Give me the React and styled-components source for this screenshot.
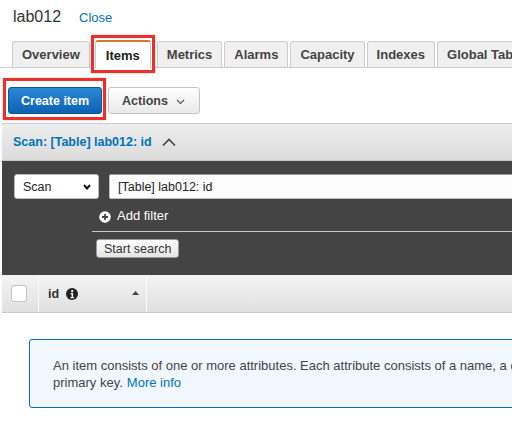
import styled, { createGlobalStyle, css } from "styled-components";

const GlobalStyle = createGlobalStyle`
  * { box-sizing: border-box; }
  html, body {
    margin: 0;
    padding: 0;
    overflow: hidden;
    background: #fff;
  }
  body {
    font-family: "Liberation Sans", Arial, Helvetica, sans-serif;
    font-size: 12.5px;
    color: #444;
  }
`;

const Page = styled.div`
  width: 1300px;
`;

const TitleRow = styled.div`
  display: flex;
  align-items: baseline;
  gap: 18px;
  padding: 7px 0 0 13px;
  height: 27px;
  line-height: 20px;
`;

const Title = styled.span`
  font-size: 16px;
  color: #333;
`;

const Link = styled.a`
  color: #0073bb;
  font-size: 13px;
  text-decoration: none;
  margin-left: ${(p) => p.$gap || 0}px;
`;

const TabBar = styled.div`
  margin-top: 13px;
  height: 28px;
  display: flex;
  align-items: flex-end;
  gap: 2px;
  padding-left: 12px;
  border-bottom: 1px solid #ccc;
`;

// red annotation boxes drawn over the screenshot
const highlight = css`
  position: relative;
  &::after {
    content: "";
    position: absolute;
    border: 3px solid #ec2f2a;
    box-shadow: 0 0 2px rgba(0, 0, 0, 0.25);
    pointer-events: none;
  }
`;

const Tab = styled.div`
  height: 26px;
  padding: 0 9px;
  display: flex;
  align-items: center;
  font-size: 13px;
  font-weight: bold;
  color: #444;
  background: #f0f0f0;
  border: 1px solid #ccc;
  border-bottom: none;
  border-radius: 3px 3px 0 0;
  white-space: nowrap;

  ${(p) =>
    p.$active &&
    css`
      height: 28px;
      margin: 0 4px -1px 3px;
      padding: 1px 10px 0;
      background: #fff;
      color: #222;
      border-top: 2px solid #d9782b;
      ${highlight}
      &::after {
        left: -5px;
        right: -5px;
        top: -7px;
        bottom: -5px;
      }
    `}
`;

const ButtonRow = styled.div`
  margin-top: 19px;
  padding-left: 8px;
  display: flex;
  gap: 6px;
`;

const Button = styled.button`
  height: 27px;
  display: flex;
  align-items: center;
  gap: 8px;
  font-family: inherit;
  font-size: 12.5px;
  font-weight: bold;
  border-radius: 3px;
  cursor: pointer;

  ${(p) =>
    p.$primary
      ? css`
          padding: 0 12px;
          color: #fff;
          background: linear-gradient(#2b88d6, #0b62b3);
          border: 1px solid #0b559b;
          ${highlight}
          &::after {
            left: -6px;
            right: -5px;
            top: -10px;
            bottom: -7px;
          }
        `
      : css`
          padding: 0 14px 0 13px;
          color: #444;
          background: linear-gradient(#fff, #e9e9e9);
          border: 1px solid #c4c4c4;
        `}
`;

const ScanHeader = styled.div`
  margin: 9px 0 0 2px;
  height: 38px;
  display: flex;
  align-items: center;
  gap: 10px;
  padding-left: 11px;
  border-top: 1px solid #ccc;
  border-bottom: 1px solid #c6c6c6;
  background: linear-gradient(#eeeeee, #dcdcdc);
`;

const ScanTitle = styled.span`
  color: #0073bb;
  font-weight: bold;
  font-size: 12.5px;
`;

const DarkPanel = styled.div`
  margin-left: 2px;
  background: #444;
  padding: 13px 0 17px;
`;

const QueryRow = styled.div`
  display: flex;
  gap: 10px;
  padding-left: 12px;
`;

const Select = styled.div`
  width: 85px;
  height: 25px;
  display: flex;
  align-items: center;
  justify-content: space-between;
  padding: 0 7px 0 8px;
  background: #fff;
  border: 1px solid #bbb;
  border-radius: 3px;
  color: #222;
  font-size: 12.5px;
`;

const Input = styled.div`
  flex: 1;
  height: 25px;
  display: flex;
  align-items: center;
  padding-left: 8px;
  background: #fcfcfc;
  border: 1px solid #bbb;
  border-top-color: #999;
  border-radius: 2px;
  color: #222;
  font-size: 12.5px;
`;

const FilterBlock = styled.div`
  margin-left: 90px;
`;

const AddFilter = styled.div`
  height: 33px;
  display: flex;
  align-items: center;
  gap: 6px;
  padding-left: 7px;
  border-bottom: 1px solid #c8c8c8;
  color: #fff;
  font-size: 13px;

  svg {
    margin-top: 3px;
  }
`;

const SmallButton = styled.button`
  margin: 7px 0 0 4px;
  height: 19px;
  padding: 0 7px;
  font-family: inherit;
  font-size: 12.5px;
  color: #333;
  background: linear-gradient(#fff, #e4e4e4);
  border: 1px solid #999;
  border-radius: 3px;
  display: block;
`;

const TableHeader = styled.div`
  margin-left: 2px;
  height: 38px;
  display: flex;
  border-bottom: 1px solid #c8c8c8;
  background: linear-gradient(#f4f4f4, #e0e0e0);
`;

const HeaderCell = styled.div`
  width: ${(p) => p.$width}px;
  display: flex;
  align-items: center;
  padding: 0 7px 0 9px;
  border-right: 1px solid #fafafa;
  font-weight: bold;
  color: #333;
`;

const Checkbox = styled.span`
  width: 16px;
  height: 17px;
  background: #fff;
  border: 1px solid #c2c2c2;
  border-radius: 3px;
`;

const SortArrow = styled.svg`
  margin-left: auto;
  margin-top: -2px;
`;

const InfoBox = styled.div`
  margin: 26px 0 0 29px;
  width: 1250px;
  padding: 17px 23px 16px;
  border: 1px solid #0a6ebd;
  border-radius: 3px;
  background: #f0f7fe;
  font-size: 13px;
  line-height: 17px;
  color: #444;
`;

const InfoLine = styled.div`
  white-space: nowrap;
`;

const ChevronUp = () => (
  <svg width="14" height="8" viewBox="0 0 14 8">
    <polyline points="1,7.5 7,1.5 13,7.5" fill="none" stroke="#444" strokeWidth="1.6" />
  </svg>
);

const ChevronDown = ({ bold }) =>
  bold ? (
    <svg width="8" height="6" viewBox="0 0 8 6">
      <polyline points="1,1 4,4.5 7,1" fill="none" stroke="#111" strokeWidth="2" />
    </svg>
  ) : (
    <svg width="9" height="6" viewBox="0 0 9 6" style={{ marginTop: 3 }}>
      <polyline points="1,1 4.5,4.5 8,1" fill="none" stroke="#555" strokeWidth="1.1" />
    </svg>
  );

const PlusCircle = () => (
  <svg width="12" height="12" viewBox="0 0 12 12">
    <circle cx="6" cy="6" r="5.8" fill="#fff" />
    <path d="M3 6h6M6 3v6" stroke="#444" strokeWidth="1.8" />
  </svg>
);

const InfoIcon = () => (
  <svg width="12" height="12" viewBox="0 0 12 12" style={{ marginLeft: 7 }}>
    <circle cx="6" cy="6" r="6" fill="#222" />
    <circle cx="6.2" cy="3.1" r="1.2" fill="#fff" />
    <path d="M4.6 5.1h2.5v4h1v1.1H4.6V9.1h1V6.2h-1z" fill="#fff" />
  </svg>
);

const tabs = ["Overview", "Items", "Metrics", "Alarms", "Capacity", "Indexes", "Global Tables", "Backups", "Triggers"];

export default function App() {
  return (
    <Page>
      <GlobalStyle />
      <TitleRow>
        <Title>lab012</Title>
        <Link href="#">Close</Link>
      </TitleRow>

      <TabBar>
        {tabs.map((t) => (
          <Tab key={t} $active={t === "Items"}>
            {t}
          </Tab>
        ))}
      </TabBar>

      <ButtonRow>
        <Button $primary>Create item</Button>
        <Button>
          Actions <ChevronDown />
        </Button>
      </ButtonRow>

      <ScanHeader>
        <ScanTitle>Scan: [Table] lab012: id</ScanTitle>
        <ChevronUp />
      </ScanHeader>

      <DarkPanel>
        <QueryRow>
          <Select>
            Scan <ChevronDown bold />
          </Select>
          <Input>[Table] lab012: id</Input>
        </QueryRow>
        <FilterBlock>
          <AddFilter>
            <PlusCircle />
            Add filter
          </AddFilter>
          <SmallButton>Start search</SmallButton>
        </FilterBlock>
      </DarkPanel>

      <TableHeader>
        <HeaderCell $width={37}>
          <Checkbox />
        </HeaderCell>
        <HeaderCell $width={108}>
          id
          <InfoIcon />
          <SortArrow width="7" height="4" viewBox="0 0 7 4">
            <polygon points="0,4 3.5,0 7,4" fill="#444" />
          </SortArrow>
        </HeaderCell>
      </TableHeader>

      <InfoBox>
        <InfoLine>
          An item consists of one or more attributes. Each attribute consists of a name, a data type, and a value.
          When you read or write an item, the only attributes that are required are those that make up the
        </InfoLine>
        <InfoLine>
          primary key.
          <Link href="#" $gap={4}>
            More info
          </Link>
        </InfoLine>
      </InfoBox>
    </Page>
  );
}
